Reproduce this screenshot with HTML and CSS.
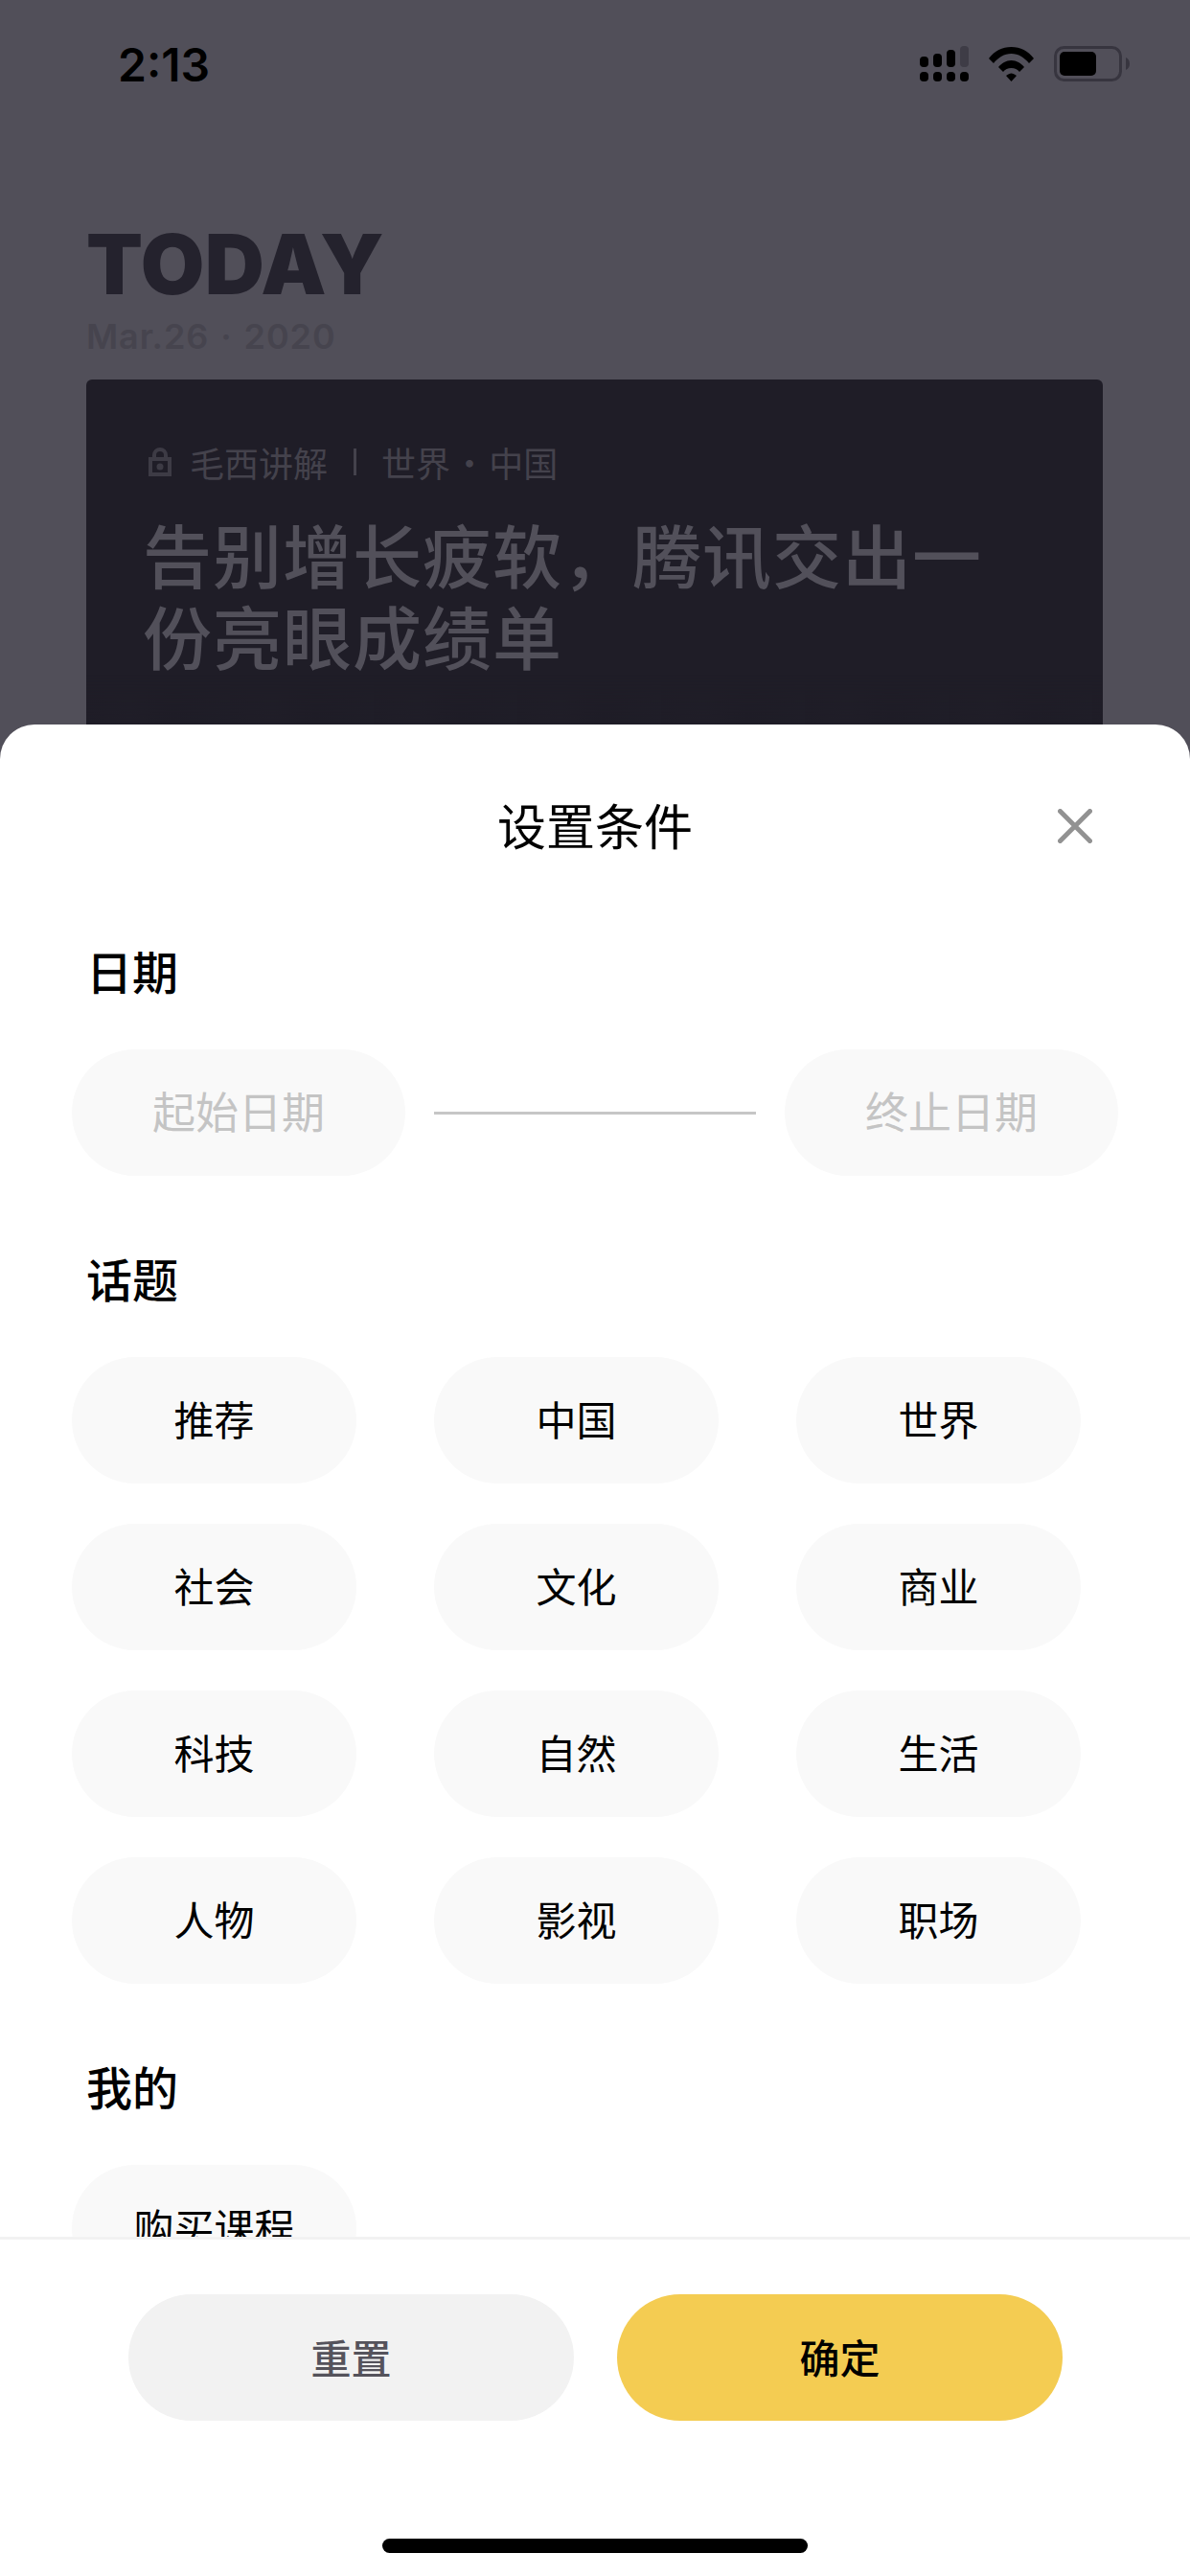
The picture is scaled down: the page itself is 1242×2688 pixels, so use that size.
FILE: index.html
```html
<!DOCTYPE html>
<html lang="zh-CN">

<head>
    <meta charset="UTF-8">
    <meta name="viewport" content="width=device-width, initial-scale=1.0">
    <title>设置条件</title>
    <link rel="stylesheet" href="styles.css">
</head>

<body>
    <div class="screen">
        <div class="status-bar">
            <span class="status-time">2:13</span>
            <div class="status-icons">
                <svg class="icon-signal" width="51" height="37" viewBox="0 0 51 37">
                    <rect x="0" y="11" width="9" height="11" rx="4" fill="#000" />
                    <rect x="14" y="8" width="9" height="14" rx="4" fill="#000" />
                    <rect x="28" y="4" width="9" height="18" rx="4" fill="#000" />
                    <rect x="42" y="0" width="9" height="22" rx="4" fill="#3e3c46" />
                    <rect x="0" y="27" width="9" height="10" rx="4" fill="#000" />
                    <rect x="14" y="27" width="9" height="10" rx="4" fill="#000" />
                    <rect x="28" y="27" width="9" height="10" rx="4" fill="#000" />
                    <rect x="42" y="27" width="9" height="10" rx="4" fill="#000" />
                </svg>
                <svg class="icon-wifi" width="47" height="36" viewBox="0 0 47 36">
                    <path d="M0 12C6 4 14 0 23.5 0C33 0 41 4 47 12L42 17C37 11 31 7 23.5 7C16 7 10 11 5 17Z" fill="#000" />
                    <path d="M10 21C13.500 17 18 14 23.500 14C29 14 33.500 17 37 21L32 26C30 23.500 27 22 23.500 22C20 22 17 23.500 15 26Z" fill="#000" />
                    <path d="M18 30C20 28.500 22 27.500 23.500 27.500C25 27.500 27 28.500 29 30L23.500 36Z" fill="#000" />
                </svg>
                <svg class="icon-battery" width="79" height="37" viewBox="0 0 79 37">
                    <rect x="1.500" y="1.500" width="68" height="34" rx="9" fill="none" stroke="#37353f" stroke-width="3" />
                    <rect x="6" y="6" width="38" height="25" rx="5" fill="#000" />
                    <path d="M75 12C77.500 13 79 15.500 79 18.500C79 21.500 77.500 24 75 25Z" fill="#37353f" />
                </svg>
            </div>
        </div>

        <div class="feed-head">
            <h1>TODAY</h1>
            <p class="feed-date">Mar.26 · 2020</p>
        </div>

        <div class="feed-card">
            <div class="card-meta">
                <svg class="icon-lock" width="24" height="30" viewBox="0 0 24 30">
                    <path d="M6 12V8a6 6 0 0 1 12 0V12" fill="none" stroke="#3d3b45" stroke-width="4" />
                    <rect x="2" y="12" width="20" height="16" fill="none" stroke="#3d3b45" stroke-width="4" />
                    <circle cx="12" cy="20" r="3.500" fill="#3d3b45" />
                </svg>
                <span>毛西讲解</span>
                <span class="meta-sep"></span>
                <span class="meta-tags">世界 · 中国</span>
            </div>
            <h2 class="card-title">告别增长疲软，腾讯交出一份亮眼成绩单</h2>
            <div class="card-photo"></div>
        </div>

        <div class="sheet">
            <div class="sheet-head">
                <span></span>
                <span class="sheet-title">设置条件</span>
                <svg class="icon-close" width="36" height="36" viewBox="0 0 36 36">
                    <path d="M2.500 2.500L33.500 33.500M33.500 2.500L2.500 33.500" fill="none" stroke="#929292" stroke-width="5" stroke-linecap="round" />
                </svg>
            </div>

            <div class="sheet-body">
                <h3 class="section-title">日期</h3>
                <div class="date-row">
                    <div class="pill pill-date">起始日期</div>
                    <div class="date-line"></div>
                    <div class="pill pill-date">终止日期</div>
                </div>

                <h3 class="section-title section-gap">话题</h3>
                <div class="pill-grid">
                    <div class="pill">推荐</div>
                    <div class="pill">中国</div>
                    <div class="pill">世界</div>
                    <div class="pill">社会</div>
                    <div class="pill">文化</div>
                    <div class="pill">商业</div>
                    <div class="pill">科技</div>
                    <div class="pill">自然</div>
                    <div class="pill">生活</div>
                    <div class="pill">人物</div>
                    <div class="pill">影视</div>
                    <div class="pill">职场</div>
                </div>

                <h3 class="section-title section-gap">我的</h3>
                <div class="pill-grid">
                    <div class="pill">购买课程</div>
                </div>
            </div>

            <div class="sheet-foot">
                <div class="foot-buttons">
                    <button class="btn btn-reset">重置</button>
                    <button class="btn btn-ok">确定</button>
                </div>
                <div class="home-bar"></div>
            </div>
        </div>
    </div>
</body>

</html>
```

FILE: styles.css
```css
/* Global Styles */
* {
    box-sizing: border-box;
    margin: 0;
    padding: 0;
}

body {
    font-family: "Noto Sans CJK SC", "Noto Sans", sans-serif;
    background: #514f59;
}

.screen {
    position: relative;
    width: 1242px;
    height: 2688px;
    overflow: hidden;
    background: #514f59;
}

/* Status bar */
.status-bar {
    display: flex;
    justify-content: space-between;
    align-items: flex-start;
    height: 243px;
    padding: 48px 63px 0 123px;
}

.status-time {
    font-family: Inter, sans-serif;
    font-size: 48px;
    font-weight: 600;
    line-height: 40px;
    color: #000;
}

.status-icons {
    display: flex;
    align-items: center;
    gap: 21px;
}

/* Feed behind the sheet */
.feed-head {
    padding-left: 90px;
    height: 153px;
}

.feed-head h1 {
    font-family: Inter, sans-serif;
    font-size: 86px;
    font-weight: 900;
    line-height: 66px;
    letter-spacing: 0.5px;
    color: #24222d;
}

.feed-date {
    margin-top: 27px;
    font-family: Inter, sans-serif;
    font-size: 36px;
    font-weight: 600;
    line-height: 30px;
    letter-spacing: 0.9px;
    word-spacing: 2px;
    color: #46444e;
}

.feed-card {
    width: 1061px;
    height: 500px;
    margin-left: 90px;
    padding-top: 66px;
    border-radius: 6px;
    background: #1f1d27;
}

.card-meta {
    display: flex;
    align-items: center;
    height: 40px;
    padding-left: 65px;
    font-size: 36px;
    line-height: 40px;
    color: #44424c;
}

.icon-lock {
    margin-right: 19px;
}

.meta-tags {
    word-spacing: -6px;
}

.meta-sep {
    width: 3px;
    height: 28px;
    margin: 0 26px 0 27px;
    background: #44424c;
}

.card-title {
    width: 900px;
    margin: 32px 0 0 59px;
    font-size: 72px;
    font-weight: 500;
    line-height: 85px;
    letter-spacing: 1px;
    color: #52505a;
}

.card-photo {
    height: 100px;
    background: repeating-linear-gradient(90deg, #1f1d27 0, #211f29 45px, #1e1c26 90px, #201f29 150px);
    -webkit-mask-image: linear-gradient(to bottom, transparent, #000);
    mask-image: linear-gradient(to bottom, transparent, #000);
}

/* Bottom sheet */
.sheet {
    position: absolute;
    left: 0;
    right: 0;
    top: 756px;
    bottom: 0;
    display: flex;
    flex-direction: column;
    border-radius: 36px 36px 0 0;
    background: #fff;
}

.sheet-head {
    display: grid;
    grid-template-columns: 1fr auto 1fr;
    align-items: center;
    flex: 0 0 211px;
    padding: 0 102px;
}

.sheet-title {
    padding-bottom: 4px;
    font-size: 51px;
    line-height: 60px;
    color: #000;
}

.icon-close {
    justify-self: end;
}

.sheet-body {
    flex: 1;
    min-height: 0;
    overflow: hidden;
    padding: 17px 75px 0;
}

.section-title {
    padding-left: 15px;
    font-size: 48px;
    font-weight: 500;
    line-height: 57px;
    color: #000;
    margin-bottom: 54px;
}

.section-gap {
    margin-top: 78px;
}

.pill {
    display: flex;
    align-items: center;
    justify-content: center;
    height: 132px;
    padding-bottom: 5px;
    border-radius: 66px;
    background: #f9f9f9;
    font-size: 42px;
    color: #000;
}

.date-row {
    display: flex;
    align-items: center;
    gap: 30px;
}

.pill-date {
    flex: 0 0 348px;
    font-size: 45px;
    color: #c4c4c4;
}

.date-line {
    flex: 1;
    height: 3px;
    background: #c6c6c6;
}

.pill-grid {
    display: grid;
    grid-template-columns: repeat(3, 297px);
    gap: 42px 81px;
}

/* Footer with buttons */
.sheet-foot {
    flex: 0 0 354px;
    border-top: 3px solid #f2f2f2;
    padding-top: 57px;
}

.foot-buttons {
    display: flex;
    gap: 45px;
    padding-left: 134px;
}

.btn {
    width: 465px;
    height: 132px;
    padding-bottom: 4px;
    border: none;
    border-radius: 66px;
    font-family: inherit;
    font-size: 42px;
    font-weight: 500;
}

.btn-reset {
    background: #f2f2f2;
    color: #55535c;
}

.btn-ok {
    background: #f4cc52;
    color: #000;
}

.home-bar {
    width: 444px;
    height: 15px;
    margin: 123px auto 0;
    border-radius: 8px;
    background: #000;
}
```
